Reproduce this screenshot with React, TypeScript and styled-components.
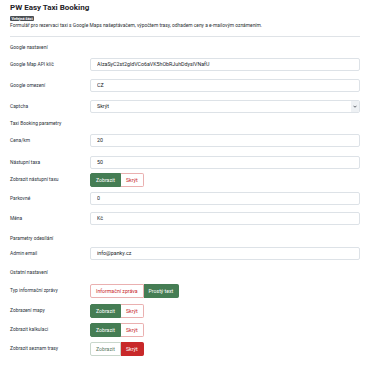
import styled, { createGlobalStyle } from "styled-components";

const GlobalStyle = createGlobalStyle`
  html, body {
    margin: 0;
    padding: 0;
    background: #ffffff;
  }
  body {
    font-family: Roboto, "Noto Sans", "Liberation Sans", sans-serif;
    color: #22262a;
  }
`;

const Page = styled.div`
  width: 370px;
  box-sizing: border-box;
  padding: 3px 10px 0;
`;

const Title = styled.h1`
  margin: 0;
  font-size: 8px;
  line-height: 9px;
  font-weight: 700;
  color: #1f2328;
`;

const Badge = styled.div`
  width: fit-content;
  margin-top: 4px;
  height: 5px;
  padding: 0 1.5px;
  background: #4b4f54;
  color: #ffffff;
  font-size: 3.8px;
  line-height: 5px;
  font-weight: 700;
  border-radius: 1px;
`;

const Description = styled.p`
  margin: 0.5px 0 0;
  font-size: 4.9px;
  line-height: 7px;
  color: #2b2f33;
`;

const Divider = styled.hr`
  margin: 7px 0 0;
  border: 0;
  border-top: 1px solid #dfe3e7;
`;

const SectionTitle = styled.div<{ $mt: number }>`
  margin-top: ${(p) => p.$mt}px;
  font-size: 4.9px;
  line-height: 8px;
  color: #2b3036;
`;

const Field = styled.div<{ $mt: number }>`
  display: grid;
  grid-template-columns: 80px 1fr;
  align-items: center;
  margin-top: ${(p) => p.$mt}px;
`;

const Label = styled.label`
  font-size: 4.9px;
  line-height: 7px;
  color: #2b3340;
`;

const TextInput = styled.input`
  display: block;
  width: 100%;
  height: 13px;
  box-sizing: border-box;
  margin: 0;
  padding: 0 6px;
  border: 1px solid #dde2e7;
  border-radius: 2px;
  background: #ffffff;
  font-family: Roboto, "Noto Sans", sans-serif;
  font-size: 5.3px;
  color: #22262a;
  outline: none;
`;

const SelectBox = styled.div`
  display: flex;
  align-items: stretch;
  height: 13px;
  box-sizing: border-box;
  border: 1px solid #dde2e7;
  border-radius: 2px;
  overflow: hidden;
`;

const SelectValue = styled.span`
  flex: 1;
  padding: 0 6px;
  font-size: 5.3px;
  line-height: 11px;
  color: #22262a;
`;

const Chevron = styled.span`
  width: 8px;
  display: flex;
  align-items: center;
  justify-content: center;
  background: #eef1f4;
  color: #3b4047;
`;

const ButtonGroup = styled.div`
  display: inline-flex;
  height: 14px;
  width: fit-content;
`;

type Variant = "success" | "danger" | "outlineSuccess" | "outlineDanger";

const variants: Record<Variant, string> = {
  success: "background:#457d54;border-color:#457d54;color:#ffffff;",
  danger: "background:#c8292a;border-color:#c8292a;color:#ffffff;",
  outlineSuccess: "background:#ffffff;border-color:#c9d7cc;color:#5b7a63;",
  outlineDanger: "background:#ffffff;border-color:#eab0b0;color:#c8292a;",
};

const ToggleButton = styled.span<{ $variant: Variant }>`
  display: flex;
  align-items: center;
  padding: 0 5px;
  border: 1px solid;
  font-size: 5.2px;
  ${(p) => variants[p.$variant]}
  &:first-child {
    border-radius: 2px 0 0 2px;
  }
  &:last-child {
    border-radius: 0 2px 2px 0;
  }
  & + & {
    border-left-width: 0;
  }
`;

type Option = { label: string; variant: Variant };

const Toggle = ({ options }: { options: Option[] }) => (
  <ButtonGroup>
    {options.map((o) => (
      <ToggleButton key={o.label} $variant={o.variant}>
        {o.label}
      </ToggleButton>
    ))}
  </ButtonGroup>
);

const showOn: Option[] = [
  { label: "Zobrazit", variant: "success" },
  { label: "Skrýt", variant: "outlineDanger" },
];

const showOff: Option[] = [
  { label: "Zobrazit", variant: "outlineSuccess" },
  { label: "Skrýt", variant: "danger" },
];

const App = () => {
  return (
    <Page>
      <GlobalStyle />
      <Title>PW Easy Taxi Booking</Title>
      <Badge>Veřejná část</Badge>
      <Description>
        Formulář pro rezervaci taxi s Google Maps našeptávačem, výpočtem trasy,
        odhadem ceny a e-mailovým oznámením.
      </Description>
      <Divider />

      <SectionTitle $mt={6}>Google nastavení</SectionTitle>
      <Field $mt={7}>
        <Label>Google Map API klíč</Label>
        <TextInput readOnly value="AIzaSyC2st2gldVCo6aVK5hObRJuhDdyslVNafU" />
      </Field>
      <Field $mt={8}>
        <Label>Google omezení</Label>
        <TextInput readOnly value="CZ" />
      </Field>
      <Field $mt={8}>
        <Label>Captcha</Label>
        <SelectBox>
          <SelectValue>Skrýt</SelectValue>
          <Chevron>
            <svg width="4" height="3" viewBox="0 0 8 5">
              <path d="M1 1l3 3 3-3" fill="none" stroke="currentColor" strokeWidth="1.6" />
            </svg>
          </Chevron>
        </SelectBox>
      </Field>

      <SectionTitle $mt={6}>Taxi Booking parametry</SectionTitle>
      <Field $mt={7}>
        <Label>Cena/km</Label>
        <TextInput readOnly value="20" />
      </Field>
      <Field $mt={9}>
        <Label>Nástupní taxa</Label>
        <TextInput readOnly value="50" />
      </Field>
      <Field $mt={4}>
        <Label>Zobrazit nástupní taxu</Label>
        <Toggle options={showOn} />
      </Field>
      <Field $mt={5}>
        <Label>Parkovné</Label>
        <TextInput readOnly value="0" />
      </Field>
      <Field $mt={7}>
        <Label>Měna</Label>
        <TextInput readOnly value="Kč" />
      </Field>

      <SectionTitle $mt={9}>Parametry odesílání</SectionTitle>
      <Field $mt={5}>
        <Label>Admin email</Label>
        <TextInput readOnly value="info@panky.cz" />
      </Field>

      <SectionTitle $mt={8}>Ostatní nastavení</SectionTitle>
      <Field $mt={8}>
        <Label>Typ informační zprávy</Label>
        <Toggle
          options={[
            { label: "Informační zpráva", variant: "outlineDanger" },
            { label: "Prostý text", variant: "success" },
          ]}
        />
      </Field>
      <Field $mt={6}>
        <Label>Zobrazení mapy</Label>
        <Toggle options={showOn} />
      </Field>
      <Field $mt={5}>
        <Label>Zobrazit kalkulaci</Label>
        <Toggle options={showOn} />
      </Field>
      <Field $mt={5}>
        <Label>Zobrazit seznam trasy</Label>
        <Toggle options={showOff} />
      </Field>
    </Page>
  );
};

export default App;
